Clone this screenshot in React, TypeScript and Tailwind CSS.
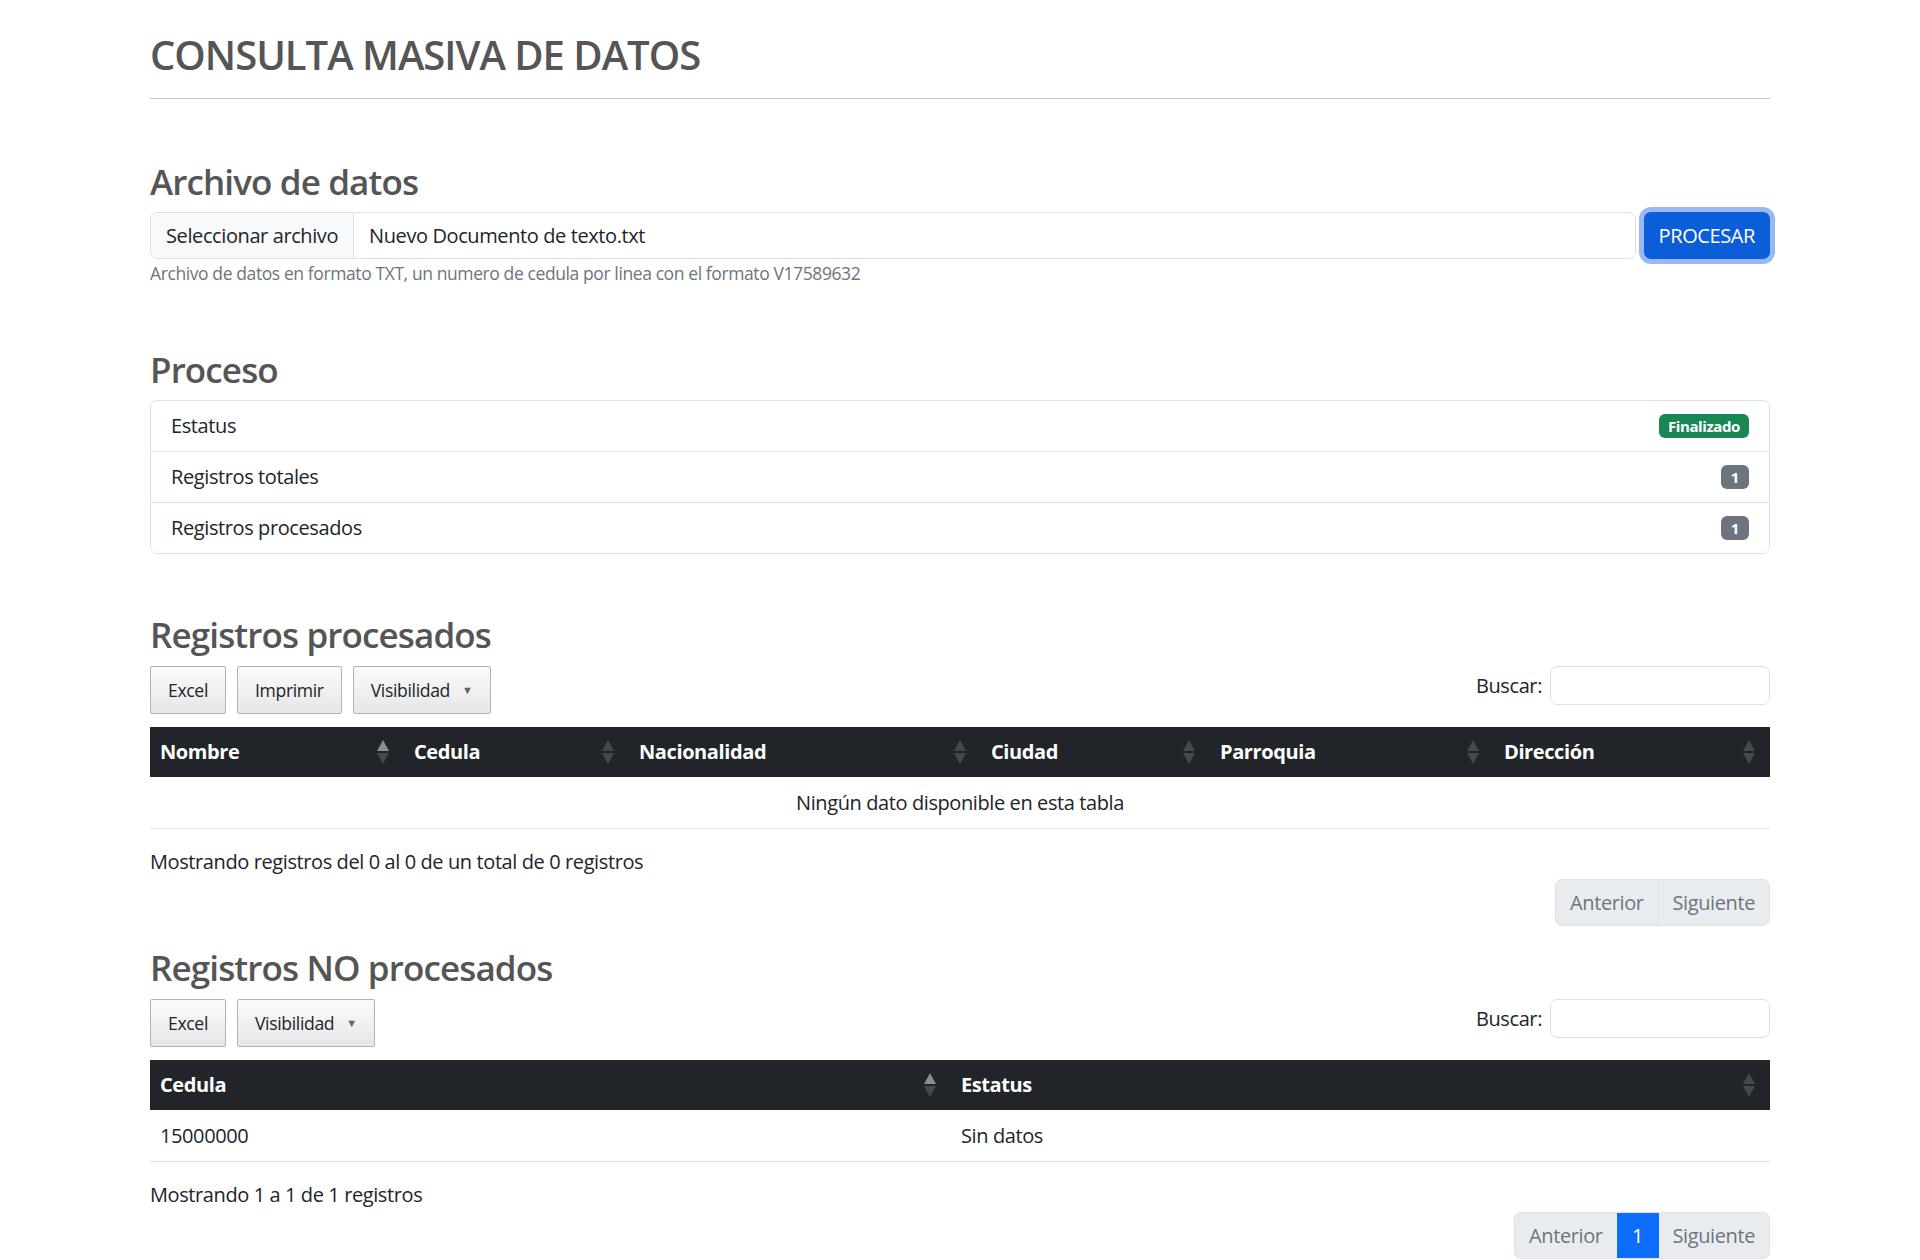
import React from "react";

function SortIcon({ up = false, down = false }: { up?: boolean; down?: boolean }) {
  return (
    <svg width="12" height="24" viewBox="0 0 12 24" className="shrink-0">
      <polygon points="6,0 12,11 0,11" fill={up ? "#8a8c8f" : "#45484c"} />
      <polygon points="0,13 12,13 6,24" fill={down ? "#8a8c8f" : "#45484c"} />
    </svg>
  );
}

function DtButton({ children, caret = false }: { children: React.ReactNode; caret?: boolean }) {
  return (
    <button className="flex h-[48px] items-center gap-[12px] rounded-[2px] border border-[#b3b3b3] bg-linear-to-b from-[#fbfbfb] to-[#e6e6e6] px-[17px] text-[17.6px] tracking-[-0.02em] text-[#212529]">
      <span>{children}</span>
      {caret && <span className="text-[11px] text-[#666]">▼</span>}
    </button>
  );
}

function Toolbar({ buttons }: { buttons: { label: string; caret?: boolean }[] }) {
  return (
    <div className="mt-[10px] flex items-start justify-between">
      <div className="flex gap-[11px]">
        {buttons.map((b) => (
          <DtButton key={b.label} caret={b.caret}>
            {b.label}
          </DtButton>
        ))}
      </div>
      <div className="flex items-center gap-[8px]">
        <span className="text-[20px]">Buscar:</span>
        <div className="h-[39px] w-[220px] rounded-[7px] border border-[#dee2e6] bg-white" />
      </div>
    </div>
  );
}

function Th({ label, w, up = false }: { label: string; w: number; up?: boolean }) {
  return (
    <div
      className="flex h-[50px] items-center justify-between pl-[10px] pr-[15px] font-bold text-white"
      style={{ width: w }}
    >
      <span>{label}</span>
      <SortIcon up={up} />
    </div>
  );
}

function Pager({ withPage = false }: { withPage?: boolean }) {
  return (
    <div className="flex justify-end">
      <div className="flex h-[47px] overflow-hidden rounded-[7px] border border-[#dee2e6] bg-[#e9ecef] text-[20px] text-[#6c757d]">
        <div className="flex items-center px-[14px]">Anterior</div>
        {withPage ? (
          <div className="flex w-[42px] items-center justify-center bg-[#0d6efd] text-white">1</div>
        ) : (
          <div className="w-px bg-[#dee2e6]" />
        )}
        <div className="flex items-center px-[14px]">Siguiente</div>
      </div>
    </div>
  );
}

export default function App() {
  const h3 = "text-[35px] leading-[42px] font-semibold tracking-[-0.025em] text-[#555]";
  return (
    <div className="min-h-screen bg-white font-['Open_Sans',sans-serif] text-[20px] leading-[30px] tracking-[-0.02em] text-[#212529]">
      <div className="mx-auto w-[1620px]">
        <h1 className="pt-[31px] text-[40px] leading-[48px] font-semibold tracking-[-0.025em] text-[#555]">CONSULTA MASIVA DE DATOS</h1>
        <div className="mt-[19px] h-px bg-[#c9c9c9]" />

        <h3 className={`mt-[62px] ${h3}`}>Archivo de datos</h3>
        <div className="mt-[9px] flex items-center gap-[8px]">
          <div className="flex h-[47px] flex-1 overflow-hidden rounded-[7px] border border-[#dee2e6]">
            <div className="flex items-center border-r border-[#dee2e6] bg-[#f8f9fa] px-[15px]">Seleccionar archivo</div>
            <div className="flex items-center px-[15px]">Nuevo Documento de texto.txt</div>
          </div>
          <button className="h-[47px] rounded-[7px] bg-[#0b5ed7] px-[15px] text-[20px] text-white ring-[5px] ring-[#98b9f5]">
            PROCESAR
          </button>
        </div>
        <p className="mt-px text-[17.5px] leading-[26px] text-[#6c757d]">
          Archivo de datos en formato TXT, un numero de cedula por linea con el formato V17589632
        </p>

        <h3 className={`mt-[63px] ${h3}`}>Proceso</h3>
        <div className="mt-[9px] rounded-[7px] border border-[#dee2e6]">
          <div className="flex h-[50px] items-center justify-between px-[20px]">
            <span>Estatus</span>
            <span className="rounded-[6px] bg-[#198754] px-[9px] text-[15px] leading-[24px] font-bold text-white">Finalizado</span>
          </div>
          <div className="flex h-[51px] items-center justify-between border-t border-[#dee2e6] px-[20px]">
            <span>Registros totales</span>
            <span className="rounded-[6px] bg-[#6c757d] px-[10px] text-[15px] leading-[24px] font-bold text-white">1</span>
          </div>
          <div className="flex h-[51px] items-center justify-between border-t border-[#dee2e6] px-[20px]">
            <span>Registros procesados</span>
            <span className="rounded-[6px] bg-[#6c757d] px-[10px] text-[15px] leading-[24px] font-bold text-white">1</span>
          </div>
        </div>

        <h3 className={`mt-[60px] ${h3}`}>Registros procesados</h3>
        <Toolbar buttons={[{ label: "Excel" }, { label: "Imprimir" }, { label: "Visibilidad", caret: true }]} />
        <div className="mt-[13px]">
          <div className="flex bg-[#212529]">
            <Th label="Nombre" w={254} up />
            <Th label="Cedula" w={225} />
            <Th label="Nacionalidad" w={352} />
            <Th label="Ciudad" w={229} />
            <Th label="Parroquia" w={284} />
            <Th label="Dirección" w={276} />
          </div>
          <div className="flex h-[52px] items-center justify-center border-b border-[#dee2e6]">
            Ningún dato disponible en esta tabla
          </div>
        </div>
        <div className="mt-[18px]">Mostrando registros del 0 al 0 de un total de 0 registros</div>
        <div className="mt-[2px]">
          <Pager />
        </div>

        <h3 className={`mt-[21px] ${h3}`}>Registros NO procesados</h3>
        <Toolbar buttons={[{ label: "Excel" }, { label: "Visibilidad", caret: true }]} />
        <div className="mt-[13px]">
          <div className="flex bg-[#212529]">
            <Th label="Cedula" w={801} up />
            <Th label="Estatus" w={819} />
          </div>
          <div className="flex h-[52px] items-center border-b border-[#dee2e6]">
            <div className="w-[801px] pl-[10px]">15000000</div>
            <div className="pl-[10px]">Sin datos</div>
          </div>
        </div>
        <div className="mt-[18px]">Mostrando 1 a 1 de 1 registros</div>
        <div className="mt-[2px]">
          <Pager withPage />
        </div>
      </div>
    </div>
  );
}
